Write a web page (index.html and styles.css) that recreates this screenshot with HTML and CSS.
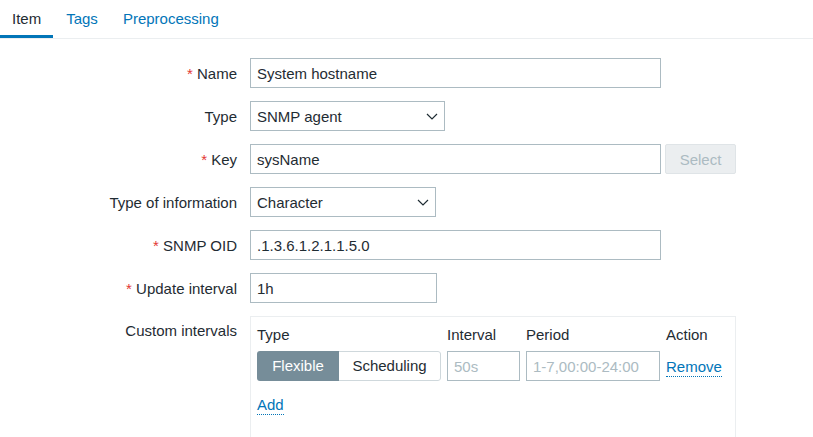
FILE: index.html
```html
<!DOCTYPE html>
<html>
<head>
<meta charset="utf-8">
<link rel="stylesheet" href="styles.css">
</head>
<body>
<div class="tabs">
  <div class="tab active">Item</div>
  <div class="tab">Tags</div>
  <div class="tab">Preprocessing</div>
</div>
<div class="form">
  <div class="row">
    <div class="label"><span class="req">*</span> Name</div>
    <div class="field"><div class="input w-long">System hostname</div></div>
  </div>
  <div class="row">
    <div class="label">Type</div>
    <div class="field"><div class="select w-type"><span>SNMP agent</span><svg class="chev" width="12" height="7" viewBox="0 0 12 7"><path d="M1 1l5 5 5-5" fill="none" stroke="#1f2c33" stroke-width="1.2"/></svg></div></div>
  </div>
  <div class="row">
    <div class="label"><span class="req">*</span> Key</div>
    <div class="field"><div class="input w-long">sysName</div><div class="btn-disabled">Select</div></div>
  </div>
  <div class="row">
    <div class="label">Type of information</div>
    <div class="field"><div class="select w-info"><span>Character</span><svg class="chev" width="12" height="7" viewBox="0 0 12 7"><path d="M1 1l5 5 5-5" fill="none" stroke="#1f2c33" stroke-width="1.2"/></svg></div></div>
  </div>
  <div class="row">
    <div class="label"><span class="req">*</span> SNMP OID</div>
    <div class="field"><div class="input w-long">.1.3.6.1.2.1.1.5.0</div></div>
  </div>
  <div class="row">
    <div class="label"><span class="req">*</span> Update interval</div>
    <div class="field"><div class="input w-upd">1h</div></div>
  </div>
  <div class="row row-top">
    <div class="label label-top">Custom intervals</div>
    <div class="field">
      <div class="intervals">
        <div class="itable">
          <div class="th">Type</div>
          <div class="th">Interval</div>
          <div class="th">Period</div>
          <div class="th">Action</div>
          <div class="seg"><div class="seg-on">Flexible</div><div class="seg-off">Scheduling</div></div>
          <div class="input ph w-int">50s</div>
          <div class="input ph w-per">1-7,00:00-24:00</div>
          <div class="act"><span class="link">Remove</span></div>
        </div>
        <div class="add"><span class="link">Add</span></div>
      </div>
    </div>
  </div>
</div>
</body>
</html>
```
FILE: styles.css
```css
* { box-sizing: border-box; }
body {
  margin: 0;
  font-family: "Liberation Sans", Arial, sans-serif;
  font-size: 15px;
  color: #1f2c33;
  background: #fff;
  overflow: hidden;
}
.tabs {
  display: flex;
  gap: 1px;
  height: 39px;
  border-bottom: 1px solid #ebeef0;
}
.tab {
  padding: 0 12px;
  line-height: 40px;
  height: 39px;
  color: #0275b8;
  margin-top: -1px;
}
.tab.active {
  color: #1f2c33;
  border-bottom: 3px solid #0275b8;
}
.form {
  padding-top: 19px;
  display: flex;
  flex-direction: column;
  gap: 13px;
}
.row {
  display: flex;
  align-items: center;
  gap: 13px;
}
.row-top { align-items: flex-start; }
.label {
  width: 237px;
  text-align: right;
  line-height: 17px;
}
.label-top { padding-top: 6px; }
.req { color: #e33734; }
.field {
  display: flex;
  align-items: center;
  gap: 4px;
}
.input, .select {
  height: 30px;
  border: 1px solid #acbbc2;
  padding: 0 6px;
  line-height: 29px;
  white-space: nowrap;
  background: #fff;
}
.w-long { width: 411px; }
.w-upd { width: 187px; }
.select {
  display: flex;
  align-items: center;
  justify-content: space-between;
  padding-right: 6px;
}
.w-type { width: 195px; }
.w-info { width: 186px; }
.chev { display: block; }
.btn-disabled {
  width: 71px;
  height: 30px;
  border: 1px solid #dfe4e7;
  background: #ebeef0;
  color: #acbbc2;
  border-radius: 2px;
  text-align: center;
  line-height: 29px;
}
.intervals {
  width: 486px;
  height: 140px;
  border: 1px solid #ebeef0;
  border-bottom: none;
  padding: 9px 6px 0 6px;
}
.itable {
  display: grid;
  grid-template-columns: 184px 73px 134px auto;
  column-gap: 6px;
  row-gap: 7px;
  align-items: center;
}
.th { line-height: 18px; }
.seg {
  display: flex;
  height: 30px;
  border-radius: 3px;
  overflow: hidden;
}
.seg-on {
  width: 82px;
  background: #768d99;
  color: #fff;
  text-align: center;
  line-height: 30px;
}
.seg-off {
  flex: 1;
  border: 1px solid #cfd8dc;
  border-left: none;
  border-radius: 0 3px 3px 0;
  text-align: center;
  line-height: 28px;
}
.ph { color: #acbbc2; }
.w-int { width: 73px; }
.w-per { width: 134px; }
.link {
  color: #0275b8;
  border-bottom: 1px dotted #0275b8;
  padding-bottom: 1px;
}
.add {
  margin-top: 15px;
  line-height: 18px;
}
```
